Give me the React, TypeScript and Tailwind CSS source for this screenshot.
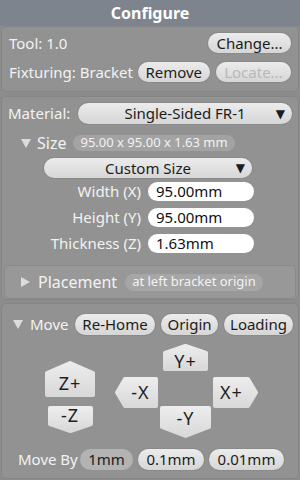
import React from 'react';

const font = { fontFamily: '"Noto Sans", "DejaVu Sans", sans-serif' };

type Dir = 'up' | 'down' | 'left' | 'right';

// pentagon jog button, drawn as svg behind the label
const Jog = ({ label, w, h, dir, tip }: { label: string; w: number; h: number; dir: Dir; tip: number }) => {
    const i = 2;
    let pts = '';
    if (dir === 'up') pts = `${w / 2},${i} ${w - i},${tip} ${w - i},${h - i} ${i},${h - i} ${i},${tip}`;
    if (dir === 'down') pts = `${i},${i} ${w - i},${i} ${w - i},${h - tip} ${w / 2},${h - i} ${i},${h - tip}`;
    if (dir === 'left') pts = `${i},${h / 2} ${tip},${i} ${w - i},${i} ${w - i},${h - i} ${tip},${h - i}`;
    if (dir === 'right') pts = `${i},${i} ${w - tip},${i} ${w - i},${h / 2} ${w - tip},${h - i} ${i},${h - i}`;
    const pad =
        dir === 'up' ? 'pt-[8px]' : dir === 'down' ? 'pb-[8px]' : dir === 'left' ? 'pl-[8px]' : 'pr-[8px]';
    return (
        <div className={`relative flex items-center justify-center shrink-0 ${pad}`} style={{ width: w, height: h }}>
            <svg className="absolute inset-0" width={w} height={h}>
                <defs>
                    <linearGradient id={`g-${label}`} x1="0" y1="0" x2="0" y2="1">
                        <stop offset="0" stopColor="#ececec" />
                        <stop offset="1" stopColor="#d9d9d9" />
                    </linearGradient>
                </defs>
                <polygon points={pts} fill={`url(#g-${label})`} stroke={`url(#g-${label})`} strokeWidth={4} strokeLinejoin="round" />
            </svg>
            <span className="relative text-[18px] text-[#1e1e1e] tracking-[1px]">{label}</span>
        </div>
    );
};

const Pill = ({ children, className = '' }: { children: React.ReactNode; className?: string }) => (
    <div
        className={`flex items-center justify-center rounded-full bg-gradient-to-b from-[#ececec] to-[#d6d6d6] text-[#1c1c1c] text-[15px] shadow-[0_0_0_1px_#8a8a8a] ${className}`}
    >
        {children}
    </div>
);

const Field = ({ label, value }: { label: string; value: string }) => (
    <div className="flex items-center h-[18px]">
        <span className="w-[139px] text-right text-[15px] text-[#f2f2f2]">{label}</span>
        <div className="ml-[7px] w-[106px] h-[19px] rounded-full bg-white flex items-center pl-[8px] text-[15px] text-[#111]">{value}</div>
    </div>
);

const Tri = ({ dir }: { dir: 'down' | 'right' }) =>
    dir === 'down' ? (
        <svg width="10" height="9" className="shrink-0">
            <polygon points="0,0 10,0 5,9" fill="#dcdcdc" />
        </svg>
    ) : (
        <svg width="9" height="10" className="shrink-0">
            <polygon points="0,0 9,5 0,10" fill="#dcdcdc" />
        </svg>
    );

const App = () => {
    return (
        <div className="w-[300px] h-[480px] bg-[#8c8c8c] overflow-hidden" style={font}>
            {/* Header */}
            <div className="h-[26px] bg-[#7d848d] flex items-center justify-center">
                <h1 className="text-[16px] font-bold text-white">Configure</h1>
            </div>

            {/* Tool panel */}
            <div className="mx-[1px] h-[66px] rounded-[5px] bg-[#929292] border border-[#858585] px-[7px] pt-[6px] flex flex-col gap-[9px]">
                <div className="flex items-center justify-between h-[20px]">
                    <span className="text-[15px] text-[#f2f2f2]">Tool: 1.0</span>
                    <Pill className="w-[83px] h-[20px]">Change...</Pill>
                </div>
                <div className="flex items-center h-[20px]">
                    <span className="w-[130px] text-[15px] text-[#f2f2f2] whitespace-nowrap">Fixturing: Bracket</span>
                    <Pill className="w-[73px] h-[20px]">Remove</Pill>
                    <Pill className="ml-[6px] w-[76px] h-[20px] !text-[#b8b8b8] from-[#dcdcdc] to-[#d0d0d0]">Locate...</Pill>
                </div>
            </div>

            {/* Material panel */}
            <div className="mx-[1px] mt-[4px] h-[204px] rounded-[5px] bg-[#929292] border border-[#858585] pt-[6px] flex flex-col">
                <div className="flex items-center h-[21px] px-[6px]">
                    <span className="text-[15px] text-[#f2f2f2] w-[70px]">Material:</span>
                    <Pill className="relative flex-1 h-[21px]">
                        <span>Single-Sided FR-1</span>
                        <span className="absolute right-[7px] text-[12px]">▼</span>
                    </Pill>
                </div>
                <div className="flex items-center h-[20px] mt-[9px] pl-[19px]">
                    <Tri dir="down" />
                    <span className="ml-[6px] text-[16px] text-[#f2f2f2]">Size</span>
                    <div className="ml-[7px] h-[16px] px-[7px] rounded-full bg-[#a3a3a3] flex items-center text-[13px] text-[#f2f2f2]">
                        95.00 x 95.00 x 1.63 mm
                    </div>
                </div>
                <div className="mt-[5px] pl-[42px]">
                    <Pill className="relative w-[208px] h-[20px]">
                        <span>Custom Size</span>
                        <span className="absolute right-[7px] text-[12px]">▼</span>
                    </Pill>
                </div>
                <div className="mt-[4px] flex flex-col gap-[8px]">
                    <Field label="Width (X)" value="95.00mm" />
                    <Field label="Height (Y)" value="95.00mm" />
                    <Field label="Thickness (Z)" value="1.63mm" />
                </div>
                <div className="mt-[13px] mx-[2px] h-[34px] rounded-[5px] bg-[#989898] border border-[#8a8a8a] flex items-center pl-[16px]">
                    <Tri dir="right" />
                    <span className="ml-[8px] text-[16px] text-[#f2f2f2]">Placement</span>
                    <div className="ml-[8px] h-[17px] px-[7px] rounded-full bg-[#a6a6a6] flex items-center text-[13px] text-[#f2f2f2]">
                        at left bracket origin
                    </div>
                </div>
            </div>

            {/* Move panel */}
            <div className="mx-[1px] mt-[3px] h-[176px] rounded-[5px] bg-[#929292] border border-[#858585] pt-[10px] flex flex-col">
                <div className="flex items-center h-[21px] pl-[11px]">
                    <Tri dir="down" />
                    <span className="ml-[7px] w-[39px] text-[15px] text-[#f2f2f2]">Move</span>
                    <Pill className="ml-[6px] w-[80px] h-[21px]">Re-Home</Pill>
                    <Pill className="ml-[6px] w-[57px] h-[21px]">Origin</Pill>
                    <Pill className="ml-[6px] w-[69px] h-[21px]">Loading</Pill>
                </div>

                {/* Jog pad */}
                <div className="mt-[10px] h-[94px] flex items-center pl-[43px]">
                    <div className="flex flex-col items-center gap-[9px] mt-[10px]">
                        <Jog label="Z+" w={50} h={36} dir="up" tip={12} />
                        <Jog label="-Z" w={45} h={27} dir="down" tip={9} />
                    </div>
                    <div className="ml-[20px]">
                        <Jog label="-X" w={43} h={31} dir="left" tip={10} />
                    </div>
                    <div className="ml-[2px] flex flex-col items-center gap-[35px] mt-[-2px]">
                        <Jog label="Y+" w={45} h={27} dir="up" tip={9} />
                        <Jog label="-Y" w={51} h={32} dir="down" tip={11} />
                    </div>
                    <div className="ml-[2px]">
                        <Jog label="X+" w={45} h={31} dir="right" tip={10} />
                    </div>
                </div>

                <div className="mt-[10px] flex items-center h-[21px] pl-[16px]">
                    <span className="w-[62px] text-[15px] text-[#f2f2f2] whitespace-nowrap">Move By</span>
                    <div className="w-[53px] h-[21px] rounded-full bg-[#b3b3b3] flex items-center justify-center text-[15px] text-[#1c1c1c]">
                        1mm
                    </div>
                    <Pill className="ml-[5px] w-[66px] h-[21px]">0.1mm</Pill>
                    <Pill className="ml-[5px] w-[75px] h-[21px]">0.01mm</Pill>
                </div>
            </div>
        </div>
    );
};

export default App;
